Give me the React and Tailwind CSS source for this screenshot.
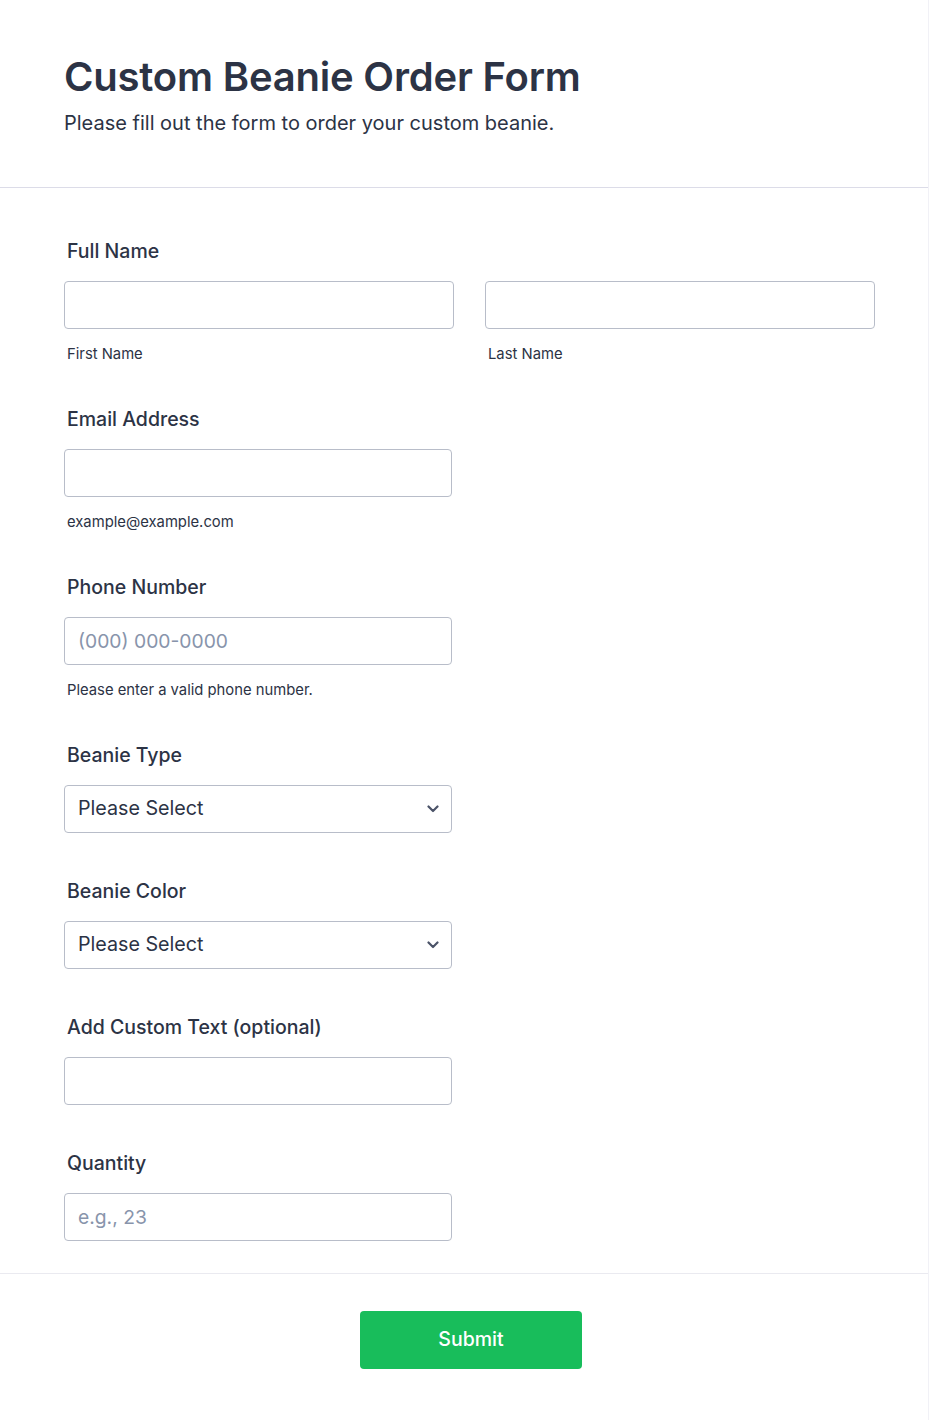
import React from 'react';

const font = { fontFamily: 'Inter, "Noto Sans", sans-serif' };

const Label = ({ children }) => (
  <div className="text-[19.5px] leading-[24px] font-medium text-[#2c3345] pl-[3px]">{children}</div>
);

const Sub = ({ children }) => (
  <div className="h-[33px] pt-[15px] text-[14.8px] leading-[20px] text-[#2c3345] pl-[3px]">{children}</div>
);

const TextInput = ({ placeholder, className = 'w-[388px]' }) => (
  <input
    type="text"
    placeholder={placeholder}
    className={`${className} h-[48px] rounded-[4px] border border-[#b8bdc9] bg-white px-[13px] text-[19.3px] text-[#2c3345] placeholder:text-[#8894ab] outline-none`}
  />
);

const Select = () => (
  <div className="w-[388px] h-[48px] rounded-[4px] border border-[#b8bdc9] bg-white flex items-center justify-between pl-[13px] pr-[12px]">
    <span className="text-[19.7px] text-[#2c3345]">Please Select</span>
    <svg width="12" height="8" viewBox="0 0 12 8" fill="none">
      <path d="M1.5 1.5L6 6L10.5 1.5" stroke="#4b5368" strokeWidth="2.2" strokeLinecap="round" strokeLinejoin="round" />
    </svg>
  </div>
);

export default function App() {
  return (
    <div style={font} className="w-[929px] min-h-[1420px] bg-white border-r border-[#f1f1f6] text-[#2c3345]">
      {/* Header */}
      <div className="pl-[64px] pt-[52px] pb-[51px] border-b border-[#dcdce8]">
        <h1 className="text-[40px] leading-[50px] font-semibold text-[#2c3345] tracking-[-0.2px]">Custom Beanie Order Form</h1>
        <p className="mt-[8px] text-[20px] leading-[26px] text-[#2c3345]">Please fill out the form to order your custom beanie.</p>
      </div>

      {/* Fields */}
      <div className="pl-[64px] pt-[51px] pb-[32px] flex flex-col gap-[45px] border-b border-[#eaeaf0]">
        <div>
          <Label>Full Name</Label>
          <div className="mt-[18px] flex gap-[31px]">
            <div>
              <TextInput className="w-[390px]" />
              <Sub>First Name</Sub>
            </div>
            <div>
              <TextInput className="w-[390px]" />
              <Sub>Last Name</Sub>
            </div>
          </div>
        </div>

        <div>
          <Label>Email Address</Label>
          <div className="mt-[18px]">
            <TextInput />
            <Sub>example@example.com</Sub>
          </div>
        </div>

        <div>
          <Label>Phone Number</Label>
          <div className="mt-[18px]">
            <TextInput placeholder="(000) 000-0000" />
            <Sub>Please enter a valid phone number.</Sub>
          </div>
        </div>

        <div className="pb-[1px]">
          <Label>Beanie Type</Label>
          <div className="mt-[18px]">
            <Select />
          </div>
        </div>

        <div className="pb-[1px]">
          <Label>Beanie Color</Label>
          <div className="mt-[18px]">
            <Select />
          </div>
        </div>

        <div className="pb-[1px]">
          <Label>Add Custom Text (optional)</Label>
          <div className="mt-[18px]">
            <TextInput />
          </div>
        </div>

        <div>
          <Label>Quantity</Label>
          <div className="mt-[18px]">
            <TextInput placeholder="e.g., 23" />
          </div>
        </div>
      </div>

      {/* Footer */}
      <div className="flex justify-center pt-[37px] pb-[48px] pl-[14px]">
        <button className="w-[222px] h-[58px] rounded-[4px] bg-[#18bd5b] text-white text-[19.5px] font-medium">
          Submit
        </button>
      </div>
    </div>
  );
}
